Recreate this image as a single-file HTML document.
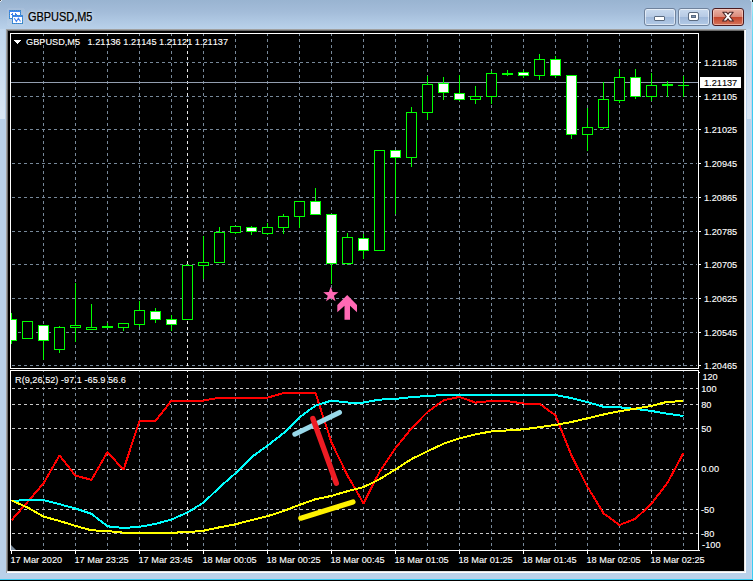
<!DOCTYPE html>
<html><head><meta charset="utf-8"><title>GBPUSD,M5</title>
<style>
html,body{margin:0;padding:0;background:#000;}
body{width:753px;height:581px;overflow:hidden;position:relative;font-family:"Liberation Sans",sans-serif;}
#win{position:absolute;left:0;top:0;width:753px;height:581px;background:#b9d1ea;overflow:hidden;}
#tb{position:absolute;left:0;top:0;width:753px;height:29px;background:linear-gradient(to bottom,#99b4d1 0%,#a3bcd9 40%,#b0c9e4 75%,#b9d1ea 100%);}
#ttl{position:absolute;left:28px;top:10.2px;font-size:11.9px;line-height:14px;color:#000;-webkit-text-stroke:.25px #000;white-space:nowrap;transform:scaleX(.92);transform-origin:0 0;text-shadow:0 0 3px rgba(255,255,255,.7),0 0 6px rgba(255,255,255,.5);}
.btn{position:absolute;top:8px;width:30px;height:16px;border:1px solid #6f829c;border-radius:3px;box-shadow:inset 0 0 0 1px rgba(255,255,255,.55);background:linear-gradient(to bottom,#c9daee 0%,#b7cbe5 48%,#a0b9da 52%,#b3cae6 100%);}
#bc{border-color:#4a1a1f;background:linear-gradient(to bottom,#eab3a6 0%,#db8b7b 48%,#c4452c 52%,#d4745b 100%);box-shadow:inset 0 0 0 1px rgba(255,220,210,.55);}
#cl{position:absolute;left:6px;top:29px;width:740px;height:544px;background:#000;}
svg{position:absolute;left:0;top:0;}
text{font-family:"Liberation Sans",sans-serif;font-size:9.8px;fill:#fff;stroke:#fff;stroke-width:.12px;font-kerning:none;}
</style></head><body>
<div id="win">
<div id="tb"></div>

<div style="position:absolute;left:752px;top:0;width:1px;height:581px;background:linear-gradient(to bottom,#b5f0fa,#7adef3 3%,#3accf2 12%,#3accf2);"></div>
<div style="position:absolute;left:751px;top:2px;width:1px;height:577px;background:#c8d4ea;"></div>
<div style="position:absolute;left:0;top:579px;width:753px;height:1px;background:#3accf2;"></div>
<div style="position:absolute;left:0;top:580px;width:753px;height:1px;background:#000;"></div>
<div style="position:absolute;left:0;top:29px;width:5px;height:90px;background:linear-gradient(to bottom,rgba(255,255,255,.12),rgba(255,255,255,.45));"></div>
<div style="position:absolute;left:747px;top:29px;width:4px;height:90px;background:linear-gradient(to bottom,rgba(255,255,255,.12),rgba(255,255,255,.45));"></div>
<div style="position:absolute;left:0;top:0;width:1px;height:1px;background:#4a4a4a;"></div>
<div style="position:absolute;left:1px;top:0;width:1px;height:1px;background:#e6edf5;"></div>
<div style="position:absolute;left:0;top:1px;width:1px;height:1px;background:#e6edf5;"></div>
<div style="position:absolute;left:752px;top:0;width:1px;height:2px;background:#0a1a20;"></div>
<div style="position:absolute;left:750px;top:0;width:2px;height:1px;background:#d8f3fa;"></div>
<div style="position:absolute;left:751px;top:1px;width:1px;height:1px;background:#cfeaf5;"></div>
<div style="position:absolute;left:6px;top:29px;width:740px;height:544px;background:#a0a0a0;"></div>
<div style="position:absolute;left:7px;top:30px;width:739px;height:543px;background:#fff;"></div>
<div style="position:absolute;left:7px;top:30px;width:738px;height:542px;background:#e3e3e3;"></div>
<div style="position:absolute;left:7px;top:30px;width:737px;height:541px;background:#696969;"></div>
<div style="position:absolute;left:8px;top:31px;width:736px;height:540px;background:#000;"></div>
<svg width="40" height="29" viewBox="0 0 40 29" shape-rendering="crispEdges">
<rect x="7" y="8" width="18" height="18" fill="#fff" opacity=".07" rx="3"/>
<rect x="9" y="10" width="12" height="9" fill="#3f84f0"/>
<rect x="9.5" y="10.5" width="11" height="8" fill="none" stroke="#3a9a6a" stroke-opacity=".45" stroke-dasharray="1 1"/>
<rect x="10" y="12" width="10" height="6" fill="#fff"/>
<path d="M11 14.5h2M12 13.5h1M15 13.5h1M15.5 13v2M16 14.5h1" stroke="#3f7ff0" fill="none"/>
<rect x="12" y="15" width="11" height="9" fill="#3f84f0"/>
<rect x="12.5" y="15.5" width="10" height="8" fill="none" stroke="#3a9a6a" stroke-opacity=".45" stroke-dasharray="1 1"/>
<rect x="13" y="17" width="9" height="6" fill="#fff"/>
<path d="M14.3 18.3L16.4 21.5L18.4 18.3L20.5 21.5" fill="none" stroke="#3f7ff0" stroke-width="1.1" shape-rendering="auto"/>
</svg>
<div id="ttl">GBPUSD,M5</div>
<div class="btn" style="left:644px"><div style="position:absolute;left:9px;top:7px;width:9px;height:3px;background:#fff;border:1px solid #5b6b80;border-radius:1px"></div></div>
<div class="btn" style="left:678px"><div style="position:absolute;left:10px;top:4px;width:5px;height:3px;border:2px solid #fff;outline:1px solid #5b6b80;border-radius:1px;background:#7f95b5;box-shadow:inset 0 0 0 1px #5b6b80"></div></div>
<div class="btn" id="bc" style="left:712px"><svg width="30" height="16" viewBox="0 0 30 16"><path d="M9.8 3.2h3.6l1.6 2l1.6-2h3.6l-3.4 4.3l3.6 4.5h-3.7l-1.7-2.2l-1.7 2.2h-3.7l3.6-4.5z" fill="#fff" stroke="#4a2626" stroke-width="1.1" stroke-linejoin="round"/></svg></div>
<svg width="753" height="581" viewBox="0 0 753 581" shape-rendering="crispEdges">
<defs>
<pattern id="hg" x="0" y="0" width="6" height="1" patternUnits="userSpaceOnUse"><rect x="0" y="0" width="3" height="1" fill="#778899"/></pattern>
<pattern id="vg" x="0" y="3" width="1" height="6" patternUnits="userSpaceOnUse"><rect x="0" y="0" width="1" height="3" fill="#778899"/></pattern>
<pattern id="hl" x="0" y="0" width="6" height="1" patternUnits="userSpaceOnUse"><rect x="0" y="0" width="3" height="1" fill="#c8c8c8"/></pattern>
<pattern id="vs" x="0" y="3" width="1" height="6" patternUnits="userSpaceOnUse"><rect x="0" y="0" width="1" height="3" fill="#e8e8e8"/></pattern>
<clipPath id="c1"><rect x="11" y="34" width="687" height="334"/></clipPath>
<clipPath id="c2"><rect x="11" y="371" width="687" height="179"/></clipPath>
</defs>
<rect x="11" y="62" width="686" height="1" fill="url(#hg)"/>
<rect x="11" y="96" width="686" height="1" fill="url(#hg)"/>
<rect x="11" y="129" width="686" height="1" fill="url(#hg)"/>
<rect x="11" y="163" width="686" height="1" fill="url(#hg)"/>
<rect x="11" y="197" width="686" height="1" fill="url(#hg)"/>
<rect x="11" y="231" width="686" height="1" fill="url(#hg)"/>
<rect x="11" y="264" width="686" height="1" fill="url(#hg)"/>
<rect x="11" y="298" width="686" height="1" fill="url(#hg)"/>
<rect x="11" y="332" width="686" height="1" fill="url(#hg)"/>
<rect x="11" y="365" width="686" height="1" fill="url(#hg)"/>
<rect x="43" y="34" width="1" height="334" fill="url(#vg)"/>
<rect x="43" y="371" width="1" height="179" fill="url(#vg)"/>
<rect x="75" y="34" width="1" height="334" fill="url(#vg)"/>
<rect x="75" y="371" width="1" height="179" fill="url(#vg)"/>
<rect x="107" y="34" width="1" height="334" fill="url(#vg)"/>
<rect x="107" y="371" width="1" height="179" fill="url(#vg)"/>
<rect x="139" y="34" width="1" height="334" fill="url(#vg)"/>
<rect x="139" y="371" width="1" height="179" fill="url(#vg)"/>
<rect x="171" y="34" width="1" height="334" fill="url(#vg)"/>
<rect x="171" y="371" width="1" height="179" fill="url(#vg)"/>
<rect x="203" y="34" width="1" height="334" fill="url(#vg)"/>
<rect x="203" y="371" width="1" height="179" fill="url(#vg)"/>
<rect x="235" y="34" width="1" height="334" fill="url(#vg)"/>
<rect x="235" y="371" width="1" height="179" fill="url(#vg)"/>
<rect x="267" y="34" width="1" height="334" fill="url(#vg)"/>
<rect x="267" y="371" width="1" height="179" fill="url(#vg)"/>
<rect x="299" y="34" width="1" height="334" fill="url(#vg)"/>
<rect x="299" y="371" width="1" height="179" fill="url(#vg)"/>
<rect x="331" y="34" width="1" height="334" fill="url(#vg)"/>
<rect x="331" y="371" width="1" height="179" fill="url(#vg)"/>
<rect x="363" y="34" width="1" height="334" fill="url(#vg)"/>
<rect x="363" y="371" width="1" height="179" fill="url(#vg)"/>
<rect x="395" y="34" width="1" height="334" fill="url(#vg)"/>
<rect x="395" y="371" width="1" height="179" fill="url(#vg)"/>
<rect x="427" y="34" width="1" height="334" fill="url(#vg)"/>
<rect x="427" y="371" width="1" height="179" fill="url(#vg)"/>
<rect x="459" y="34" width="1" height="334" fill="url(#vg)"/>
<rect x="459" y="371" width="1" height="179" fill="url(#vg)"/>
<rect x="491" y="34" width="1" height="334" fill="url(#vg)"/>
<rect x="491" y="371" width="1" height="179" fill="url(#vg)"/>
<rect x="523" y="34" width="1" height="334" fill="url(#vg)"/>
<rect x="523" y="371" width="1" height="179" fill="url(#vg)"/>
<rect x="555" y="34" width="1" height="334" fill="url(#vg)"/>
<rect x="555" y="371" width="1" height="179" fill="url(#vg)"/>
<rect x="587" y="34" width="1" height="334" fill="url(#vg)"/>
<rect x="587" y="371" width="1" height="179" fill="url(#vg)"/>
<rect x="619" y="34" width="1" height="334" fill="url(#vg)"/>
<rect x="619" y="371" width="1" height="179" fill="url(#vg)"/>
<rect x="651" y="34" width="1" height="334" fill="url(#vg)"/>
<rect x="651" y="371" width="1" height="179" fill="url(#vg)"/>
<rect x="683" y="34" width="1" height="334" fill="url(#vg)"/>
<rect x="683" y="371" width="1" height="179" fill="url(#vg)"/>
<rect x="11" y="388" width="687" height="1" fill="url(#hl)"/>
<rect x="11" y="404" width="687" height="1" fill="url(#hl)"/>
<rect x="11" y="428" width="687" height="1" fill="url(#hl)"/>
<rect x="11" y="469" width="687" height="1" fill="url(#hl)"/>
<rect x="11" y="509" width="687" height="1" fill="url(#hl)"/>
<rect x="11" y="533" width="687" height="1" fill="url(#hl)"/>
<rect x="187" y="34" width="1" height="334" fill="url(#vs)"/>
<rect x="187" y="371" width="1" height="179" fill="url(#vs)"/>
<rect x="11" y="82" width="687" height="1" fill="#939eb0"/>
<g clip-path="url(#c1)">
<rect x="11" y="313" width="1" height="31" fill="#00ff00"/>
<rect x="6" y="319" width="11" height="22" fill="#00ff00"/>
<rect x="7" y="320" width="9" height="20" fill="#fff"/>
<rect x="27" y="321" width="1" height="18" fill="#00ff00"/>
<rect x="22" y="321" width="11" height="18" fill="#00ff00"/>
<rect x="23" y="322" width="9" height="16" fill="#000"/>
<rect x="43" y="325" width="1" height="35" fill="#00ff00"/>
<rect x="38" y="325" width="11" height="16" fill="#00ff00"/>
<rect x="39" y="326" width="9" height="14" fill="#fff"/>
<rect x="59" y="326" width="1" height="27" fill="#00ff00"/>
<rect x="54" y="327" width="11" height="23" fill="#00ff00"/>
<rect x="55" y="328" width="9" height="21" fill="#000"/>
<rect x="75" y="283" width="1" height="59" fill="#00ff00"/>
<rect x="70" y="325" width="11" height="3" fill="#00ff00"/>
<rect x="71" y="326" width="9" height="1" fill="#000"/>
<rect x="91" y="304" width="1" height="26" fill="#00ff00"/>
<rect x="86" y="327" width="11" height="3" fill="#00ff00"/>
<rect x="87" y="328" width="9" height="1" fill="#000"/>
<rect x="107" y="323" width="1" height="5" fill="#00ff00"/>
<rect x="102" y="326" width="11" height="2" fill="#00ff00"/>
<rect x="123" y="323" width="1" height="8" fill="#00ff00"/>
<rect x="118" y="323" width="11" height="5" fill="#00ff00"/>
<rect x="119" y="324" width="9" height="3" fill="#000"/>
<rect x="139" y="301" width="1" height="26" fill="#00ff00"/>
<rect x="134" y="310" width="11" height="15" fill="#00ff00"/>
<rect x="135" y="311" width="9" height="13" fill="#000"/>
<rect x="155" y="308" width="1" height="15" fill="#00ff00"/>
<rect x="150" y="311" width="11" height="9" fill="#00ff00"/>
<rect x="151" y="312" width="9" height="7" fill="#fff"/>
<rect x="171" y="315" width="1" height="16" fill="#00ff00"/>
<rect x="166" y="319" width="11" height="6" fill="#00ff00"/>
<rect x="167" y="320" width="9" height="4" fill="#fff"/>
<rect x="187" y="264" width="1" height="56" fill="#00ff00"/>
<rect x="182" y="265" width="11" height="55" fill="#00ff00"/>
<rect x="183" y="266" width="9" height="53" fill="#000"/>
<rect x="203" y="236" width="1" height="43" fill="#00ff00"/>
<rect x="198" y="262" width="11" height="4" fill="#00ff00"/>
<rect x="199" y="263" width="9" height="2" fill="#000"/>
<rect x="219" y="227" width="1" height="36" fill="#00ff00"/>
<rect x="214" y="232" width="11" height="31" fill="#00ff00"/>
<rect x="215" y="233" width="9" height="29" fill="#000"/>
<rect x="235" y="226" width="1" height="8" fill="#00ff00"/>
<rect x="230" y="226" width="11" height="7" fill="#00ff00"/>
<rect x="231" y="227" width="9" height="5" fill="#000"/>
<rect x="251" y="226" width="1" height="9" fill="#00ff00"/>
<rect x="246" y="227" width="11" height="5" fill="#00ff00"/>
<rect x="247" y="228" width="9" height="3" fill="#fff"/>
<rect x="267" y="223" width="1" height="12" fill="#00ff00"/>
<rect x="262" y="227" width="11" height="7" fill="#00ff00"/>
<rect x="263" y="228" width="9" height="5" fill="#000"/>
<rect x="283" y="214" width="1" height="20" fill="#00ff00"/>
<rect x="278" y="216" width="11" height="12" fill="#00ff00"/>
<rect x="279" y="217" width="9" height="10" fill="#000"/>
<rect x="299" y="201" width="1" height="27" fill="#00ff00"/>
<rect x="294" y="201" width="11" height="16" fill="#00ff00"/>
<rect x="295" y="202" width="9" height="14" fill="#000"/>
<rect x="315" y="188" width="1" height="27" fill="#00ff00"/>
<rect x="310" y="201" width="11" height="14" fill="#00ff00"/>
<rect x="311" y="202" width="9" height="12" fill="#fff"/>
<rect x="331" y="214" width="1" height="70" fill="#00ff00"/>
<rect x="326" y="214" width="11" height="50" fill="#00ff00"/>
<rect x="327" y="215" width="9" height="48" fill="#fff"/>
<rect x="347" y="233" width="1" height="32" fill="#00ff00"/>
<rect x="342" y="237" width="11" height="27" fill="#00ff00"/>
<rect x="343" y="238" width="9" height="25" fill="#000"/>
<rect x="363" y="234" width="1" height="25" fill="#00ff00"/>
<rect x="358" y="238" width="11" height="13" fill="#00ff00"/>
<rect x="359" y="239" width="9" height="11" fill="#fff"/>
<rect x="379" y="150" width="1" height="101" fill="#00ff00"/>
<rect x="374" y="150" width="11" height="101" fill="#00ff00"/>
<rect x="375" y="151" width="9" height="99" fill="#000"/>
<rect x="395" y="150" width="1" height="64" fill="#00ff00"/>
<rect x="390" y="150" width="11" height="8" fill="#00ff00"/>
<rect x="391" y="151" width="9" height="6" fill="#fff"/>
<rect x="411" y="107" width="1" height="60" fill="#00ff00"/>
<rect x="406" y="112" width="11" height="46" fill="#00ff00"/>
<rect x="407" y="113" width="9" height="44" fill="#000"/>
<rect x="427" y="76" width="1" height="44" fill="#00ff00"/>
<rect x="422" y="84" width="11" height="29" fill="#00ff00"/>
<rect x="423" y="85" width="9" height="27" fill="#000"/>
<rect x="443" y="77" width="1" height="23" fill="#00ff00"/>
<rect x="438" y="83" width="11" height="10" fill="#00ff00"/>
<rect x="439" y="84" width="9" height="8" fill="#fff"/>
<rect x="459" y="75" width="1" height="26" fill="#00ff00"/>
<rect x="454" y="93" width="11" height="7" fill="#00ff00"/>
<rect x="455" y="94" width="9" height="5" fill="#fff"/>
<rect x="475" y="86" width="1" height="18" fill="#00ff00"/>
<rect x="470" y="96" width="11" height="4" fill="#00ff00"/>
<rect x="471" y="97" width="9" height="2" fill="#000"/>
<rect x="491" y="71" width="1" height="33" fill="#00ff00"/>
<rect x="486" y="73" width="11" height="24" fill="#00ff00"/>
<rect x="487" y="74" width="9" height="22" fill="#000"/>
<rect x="507" y="70" width="1" height="6" fill="#00ff00"/>
<rect x="502" y="73" width="11" height="2" fill="#00ff00"/>
<rect x="523" y="70" width="1" height="8" fill="#00ff00"/>
<rect x="518" y="72" width="11" height="4" fill="#00ff00"/>
<rect x="519" y="73" width="9" height="2" fill="#fff"/>
<rect x="539" y="54" width="1" height="26" fill="#00ff00"/>
<rect x="534" y="59" width="11" height="17" fill="#00ff00"/>
<rect x="535" y="60" width="9" height="15" fill="#000"/>
<rect x="555" y="56" width="1" height="22" fill="#00ff00"/>
<rect x="550" y="59" width="11" height="17" fill="#00ff00"/>
<rect x="551" y="60" width="9" height="15" fill="#fff"/>
<rect x="571" y="75" width="1" height="64" fill="#00ff00"/>
<rect x="566" y="75" width="11" height="60" fill="#00ff00"/>
<rect x="567" y="76" width="9" height="58" fill="#fff"/>
<rect x="587" y="108" width="1" height="43" fill="#00ff00"/>
<rect x="582" y="127" width="11" height="8" fill="#00ff00"/>
<rect x="583" y="128" width="9" height="6" fill="#000"/>
<rect x="603" y="82" width="1" height="47" fill="#00ff00"/>
<rect x="598" y="99" width="11" height="29" fill="#00ff00"/>
<rect x="599" y="100" width="9" height="27" fill="#000"/>
<rect x="619" y="69" width="1" height="34" fill="#00ff00"/>
<rect x="614" y="77" width="11" height="24" fill="#00ff00"/>
<rect x="615" y="78" width="9" height="22" fill="#000"/>
<rect x="635" y="69" width="1" height="30" fill="#00ff00"/>
<rect x="630" y="77" width="11" height="20" fill="#00ff00"/>
<rect x="631" y="78" width="9" height="18" fill="#fff"/>
<rect x="651" y="73" width="1" height="28" fill="#00ff00"/>
<rect x="646" y="85" width="11" height="12" fill="#00ff00"/>
<rect x="647" y="86" width="9" height="10" fill="#000"/>
<rect x="667" y="81" width="1" height="16" fill="#00ff00"/>
<rect x="662" y="84" width="11" height="2" fill="#00ff00"/>
<rect x="683" y="76" width="1" height="21" fill="#00ff00"/>
<rect x="678" y="85" width="11" height="1" fill="#00ff00"/>
</g>
<rect x="10" y="33" width="689" height="1" fill="#fff"/>
<rect x="10" y="33" width="1" height="336" fill="#fff"/>
<rect x="10" y="368" width="689" height="1" fill="#fff"/>
<rect x="698" y="33" width="1" height="336" fill="#fff"/>
<rect x="10" y="370" width="689" height="1" fill="#fff"/>
<rect x="10" y="370" width="1" height="181" fill="#fff"/>
<rect x="10" y="550" width="689" height="1" fill="#fff"/>
<rect x="698" y="370" width="1" height="181" fill="#fff"/>
<path d="M11 545 L16 550 L11 550 Z" fill="#778899" shape-rendering="auto"/>
<rect x="699" y="62" width="2" height="1" fill="#fff"/>
<rect x="699" y="96" width="2" height="1" fill="#fff"/>
<rect x="699" y="129" width="2" height="1" fill="#fff"/>
<rect x="699" y="163" width="2" height="1" fill="#fff"/>
<rect x="699" y="197" width="2" height="1" fill="#fff"/>
<rect x="699" y="231" width="2" height="1" fill="#fff"/>
<rect x="699" y="264" width="2" height="1" fill="#fff"/>
<rect x="699" y="298" width="2" height="1" fill="#fff"/>
<rect x="699" y="332" width="2" height="1" fill="#fff"/>
<rect x="699" y="365" width="2" height="1" fill="#fff"/>
<rect x="699" y="550" width="1" height="1" fill="#fff"/>
<rect x="699" y="372" width="1" height="1" fill="#fff"/>
<rect x="11" y="551" width="1" height="3" fill="#fff"/>
<rect x="75" y="551" width="1" height="3" fill="#fff"/>
<rect x="139" y="551" width="1" height="3" fill="#fff"/>
<rect x="203" y="551" width="1" height="3" fill="#fff"/>
<rect x="267" y="551" width="1" height="3" fill="#fff"/>
<rect x="331" y="551" width="1" height="3" fill="#fff"/>
<rect x="395" y="551" width="1" height="3" fill="#fff"/>
<rect x="459" y="551" width="1" height="3" fill="#fff"/>
<rect x="523" y="551" width="1" height="3" fill="#fff"/>
<rect x="587" y="551" width="1" height="3" fill="#fff"/>
<rect x="651" y="551" width="1" height="3" fill="#fff"/>
</svg>
<svg width="753" height="581" viewBox="0 0 753 581">
<g clip-path="url(#c2)" shape-rendering="crispEdges">
<polyline points="11.5,520.3 27.5,502 43.5,483.4 59.5,455.4 75.5,475.7 91.5,479.8 107.5,452 123.5,469.8 139.5,420.9 155.5,420.9 171.5,400.6 187.5,400.6 203.5,400.6 219.5,397.6 235.5,397.6 251.5,397.6 267.5,397.6 283.5,393.1 299.5,393.1 315.5,393.1 331.5,442.5 347.5,475.5 363.5,503.3 379.5,471.9 395.5,448.1 411.5,428.3 427.5,412 443.5,400.3 459.5,396.9 475.5,402.6 491.5,401 507.5,401.2 523.5,403.5 539.5,403.8 555.5,415.4 571.5,455.6 587.5,486.8 603.5,513.3 619.5,525 635.5,518.7 651.5,503.7 667.5,482.8 683.5,452.8" stroke="#ff0000" fill="none" stroke-width="2" stroke-linejoin="bevel"/>
<polyline points="11.5,501.2 18.5,500.6 19.5,500.2 43.5,500.2 59.5,504.2 75.5,508.5 91.5,513.9 107.5,526.3 123.5,528 139.5,526.8 155.5,523.9 171.5,519.5 187.5,512.4 203.5,502.7 219.5,487.3 235.5,473.3 251.5,457.2 267.5,445.6 283.5,433.2 299.5,417.3 315.5,405.6 331.5,400.6 347.5,402.5 363.5,402.5 379.5,399.6 395.5,398.9 411.5,397.1 427.5,396 443.5,395.1 459.5,395 475.5,395 491.5,395 507.5,395 523.5,395 539.5,395 555.5,395 571.5,398.1 587.5,402.1 603.5,406.8 619.5,407.3 635.5,409 651.5,411 667.5,413.8 683.5,416" stroke="#00ffff" fill="none" stroke-width="2" stroke-linejoin="bevel"/>
<polyline points="11.5,500.4 27.5,507.5 43.5,516.6 59.5,521 75.5,525.9 91.5,530.3 107.5,531 123.5,532.7 139.5,532.7 155.5,532.7 171.5,532.7 187.5,532.2 203.5,530.7 219.5,527.3 235.5,524.3 251.5,520.1 267.5,516.2 283.5,511 299.5,504.9 315.5,499.2 331.5,495.9 347.5,491.2 363.5,487.1 379.5,479.2 395.5,469.4 411.5,459.1 427.5,451.2 443.5,443.8 459.5,438.3 475.5,434.4 491.5,431.4 507.5,430.4 523.5,429.3 539.5,427.2 555.5,424.9 571.5,422 587.5,418.3 603.5,414.5 619.5,411.2 635.5,408.7 651.5,405.9 667.5,401.7 683.5,401.3" stroke="#ffff00" fill="none" stroke-width="2" stroke-linejoin="bevel"/>
</g>
<line x1="294.8" y1="434.2" x2="339.5" y2="412.4" stroke="#99d9ea" stroke-width="5" stroke-linecap="round"/>
<line x1="300.8" y1="518.2" x2="353" y2="502" stroke="#fff200" stroke-width="5.2" stroke-linecap="round"/>
<line x1="312.9" y1="418.6" x2="336.3" y2="483.2" stroke="#ed1c24" stroke-width="5.4" stroke-linecap="round"/>
<polygon points="330.8,286.8 332.7,292.1 338.4,292.3 333.9,295.8 335.5,301.3 330.8,298.1 326.1,301.3 327.7,295.8 323.2,292.3 328.9,292.1" fill="#ff69b4"/>
<polygon points="347.2,295 357,305 357,312.2 350,305.8 350,319.8 344.5,319.8 344.5,305.8 337.3,312.2 337.3,305" fill="#ff69b4"/>
<path d="M14 40h7v1h-1v1h-1v1h-1v1h-1v-1h-1v-1h-1v-1h-1z" fill="#fff" shape-rendering="crispEdges"/>
<text transform="translate(26,45) scale(0.9378,1)" xml:space="preserve">GBPUSD,M5</text>
<text transform="translate(87.5,45) scale(0.9378,1)" xml:space="preserve">1.21136 1.21145 1.21121 1.21137</text>
<text transform="translate(15,383) scale(0.9378,1)" xml:space="preserve">R(9,26,52) -97.1 -65.9 56.6</text>
<text transform="translate(704,65.7) scale(0.9378,1)" xml:space="preserve">1.21185</text>
<text transform="translate(704,99.7) scale(0.9378,1)" xml:space="preserve">1.21105</text>
<text transform="translate(704,132.7) scale(0.9378,1)" xml:space="preserve">1.21025</text>
<text transform="translate(704,166.7) scale(0.9378,1)" xml:space="preserve">1.20945</text>
<text transform="translate(704,200.7) scale(0.9378,1)" xml:space="preserve">1.20865</text>
<text transform="translate(704,234.7) scale(0.9378,1)" xml:space="preserve">1.20785</text>
<text transform="translate(704,267.7) scale(0.9378,1)" xml:space="preserve">1.20705</text>
<text transform="translate(704,301.7) scale(0.9378,1)" xml:space="preserve">1.20625</text>
<text transform="translate(704,335.7) scale(0.9378,1)" xml:space="preserve">1.20545</text>
<text transform="translate(704,369.3) scale(0.9378,1)" xml:space="preserve">1.20465</text>
<rect x="700" y="77" width="41" height="11" fill="#fff" shape-rendering="crispEdges"/>
<text transform="translate(704,85.7) scale(0.9378,1)" xml:space="preserve" style="fill:#000;stroke:#000">1.21137</text>
<text transform="translate(702.4,380.4) scale(0.9378,1)" xml:space="preserve">120</text>
<text transform="translate(701.2,391.5) scale(0.9378,1)" xml:space="preserve">100</text>
<text transform="translate(701.2,407.5) scale(0.9378,1)" xml:space="preserve">80</text>
<text transform="translate(701.2,431.5) scale(0.9378,1)" xml:space="preserve">50</text>
<text transform="translate(701.2,472.4) scale(0.9378,1)" xml:space="preserve">0.00</text>
<text transform="translate(701.0,512.5) scale(0.9378,1)" xml:space="preserve">-50</text>
<text transform="translate(701.0,536.5) scale(0.9378,1)" xml:space="preserve">-80</text>
<text transform="translate(702.1,547.5) scale(0.9378,1)" xml:space="preserve">-100</text>
<text transform="translate(10.5,562.6) scale(0.9378,1)" xml:space="preserve">17 Mar 2020</text>
<text transform="translate(74.5,562.6) scale(0.9378,1)" xml:space="preserve">17 Mar 23:25</text>
<text transform="translate(138.5,562.6) scale(0.9378,1)" xml:space="preserve">17 Mar 23:45</text>
<text transform="translate(202.5,562.6) scale(0.9378,1)" xml:space="preserve">18 Mar 00:05</text>
<text transform="translate(266.5,562.6) scale(0.9378,1)" xml:space="preserve">18 Mar 00:25</text>
<text transform="translate(330.5,562.6) scale(0.9378,1)" xml:space="preserve">18 Mar 00:45</text>
<text transform="translate(394.5,562.6) scale(0.9378,1)" xml:space="preserve">18 Mar 01:05</text>
<text transform="translate(458.5,562.6) scale(0.9378,1)" xml:space="preserve">18 Mar 01:25</text>
<text transform="translate(522.5,562.6) scale(0.9378,1)" xml:space="preserve">18 Mar 01:45</text>
<text transform="translate(586.5,562.6) scale(0.9378,1)" xml:space="preserve">18 Mar 02:05</text>
<text transform="translate(650.5,562.6) scale(0.9378,1)" xml:space="preserve">18 Mar 02:25</text>
</svg>
</div></body></html>
